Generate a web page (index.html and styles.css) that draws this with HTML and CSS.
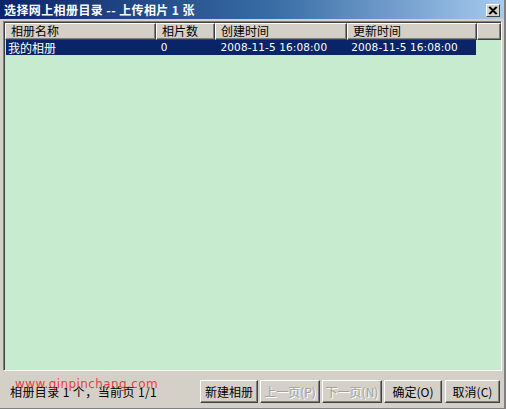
FILE: index.html
```html
<!DOCTYPE html>
<html>
<head>
<meta charset="utf-8">
<link rel="stylesheet" href="styles.css">
</head>
<body>
<div class="window">
  <div class="titlebar">
    <span class="title">选择网上相册目录 -- 上传相片 1 张</span>
    <span class="close">
      <svg width="10" height="9" viewBox="0 0 10 9"><path d="M1 1L8 8M2 1L9 8M8 1L1 8M9 1L2 8" stroke="#000" stroke-width="1.3"/></svg>
    </span>
  </div>
  <div class="grid">
    <div class="head">
      <div class="hc c1">相册名称</div>
      <div class="hc c2">相片数</div>
      <div class="hc c3">创建时间</div>
      <div class="hc c4">更新时间</div>
      <div class="hc c5"></div>
    </div>
    <div class="row sel">
      <div class="dc c1">我的相册</div>
      <div class="dc c2 num">0</div>
      <div class="dc c3 num">2008-11-5 16:08:00</div>
      <div class="dc c4 num">2008-11-5 16:08:00</div>
    </div>
  </div>
  <div class="footer">
    <div class="status">相册目录 1 个，当前页 1/1<span class="wm">www.qinpinchang.com</span></div>
    <div class="buttons">
      <button class="btn b1">新建相册</button>
      <button class="btn b2 dis">上一页(P)</button>
      <button class="btn b3 dis">下一页(N)</button>
      <button class="btn b4">确定(O)</button>
      <button class="btn b5">取消(C)</button>
    </div>
  </div>
</div>
</body>
</html>
```
FILE: styles.css
```css
html, body { margin: 0; padding: 0; }
body { width: 506px; height: 409px; overflow: hidden; background: #d4d0c8; }
.window {
  width: 506px; height: 409px; box-sizing: border-box;
  background: #d4d0c8;
  border-right: 2px solid #808080;
  border-bottom: 1px solid #808080;
  display: flex; flex-direction: column;
  font-family: "Noto Sans CJK SC", "DejaVu Sans", sans-serif;
  font-size: 12px; color: #000;
}
.titlebar {
  height: 19px; flex: none;
  background: linear-gradient(to right, #0a246a 0%, #3a6ea5 55%, #a6caf0 100%);
  display: flex; align-items: center; justify-content: space-between;
  padding: 0 4px 0 4px;
}
.title { color: #fff; font-weight: bold; font-size: 12px; line-height: 19px; letter-spacing: 0.4px; }
.close {
  width: 14px; height: 13px; box-sizing: border-box;
  background: #d4d0c8;
  border: 1px solid; border-color: #fff #404040 #404040 #fff;
  display: flex; align-items: center; justify-content: center;
  margin-top: 1px;
}
.grid {
  margin: 2px 2px 0 3px;
  height: 348px; flex: none;
  background: #c7ebcf;
  border: 1px solid; border-color: #808080 #fff #fff #808080;
  box-shadow: inset 1px 1px 0 #404040;
  overflow: hidden;
}
.head { display: flex; height: 17px; margin: 1px 0 0 1px; }
.hc {
  box-sizing: border-box; height: 17px;
  background: #d4d0c8;
  border: 1px solid; border-color: #fff #404040 #404040 #fff;
  box-shadow: inset -1px -1px 0 #808080;
  padding-left: 5px; line-height: 14px; font-size: 12px;
  white-space: nowrap; overflow: hidden;
}
.c1 { width: 151px; }
.c2 { width: 59px; }
.c3 { width: 132px; }
.c4 { width: 130px; }
.c5 { flex: 1; }
.row { display: flex; height: 15px; margin: 0 0 0 2px; }
.row .c1 { width: 150px; }
.sel { background: #0a246a; color: #fff; width: 470px; }
.dc { box-sizing: border-box; padding-left: 4px; line-height: 15px; white-space: nowrap; font-size: 12px; }
.num { font-family: "DejaVu Sans", sans-serif; font-size: 10.5px; letter-spacing: 0.1px; }
.row .c1 { padding-left: 2px; }
.row .c2 { padding-left: 5px; }
.row .c3 { padding-left: 6px; }
.row .c4 { padding-left: 5px; }
.footer {
  flex: 1; display: flex; align-items: center; justify-content: space-between;
  padding: 0 4px 0 10px;
}
.status { position: relative; font-size: 12px; margin-top: 4px; white-space: nowrap; letter-spacing: 0.4px; }
.wm {
  position: absolute; left: 5px; top: -6px;
  color: #f0102a; font-family: "DejaVu Sans", sans-serif; font-size: 12px; font-weight: normal;
  letter-spacing: 0.4px; opacity: 0.8;
}
.buttons { display: flex; gap: 2px; margin-top: 4px; }
.btn {
  height: 23px; box-sizing: border-box; padding: 0;
  background: #d4d0c8;
  border: 1px solid; border-color: #fff #404040 #404040 #fff;
  box-shadow: inset -1px -1px 0 #808080;
  font-family: "Noto Sans CJK SC", "DejaVu Sans", sans-serif; font-size: 12px; color: #000;
}
.b1 { width: 58px; }
.b2 { width: 60px; }
.b3 { width: 60px; }
.b4 { width: 58px; }
.b5 { width: 55px; margin-left: 1px; }
.dis { color: #a0a0a0; text-shadow: 1px 1px 0 #fff; }
```
